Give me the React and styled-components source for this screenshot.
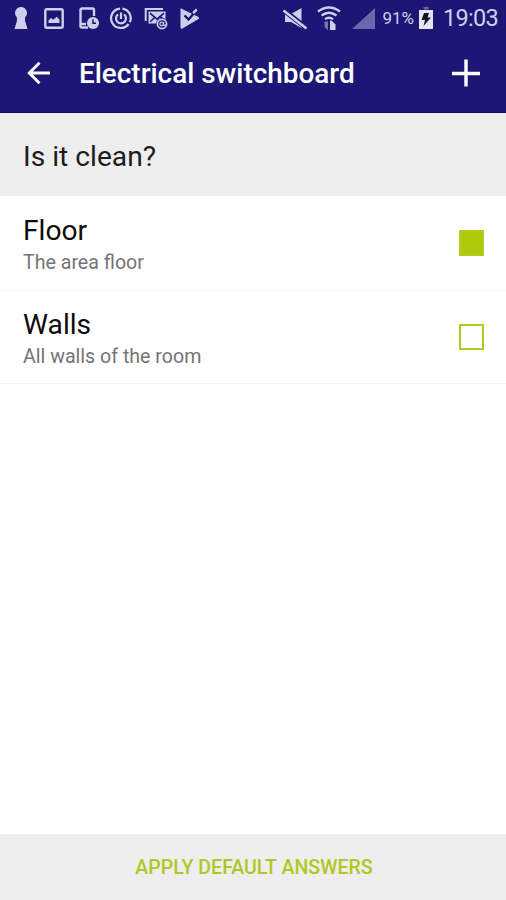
import React, { useState } from 'react'
import styled, { createGlobalStyle } from 'styled-components'

const questions = [
  { id: 'floor', title: 'Floor', hint: 'The area floor', checked: true },
  { id: 'walls', title: 'Walls', hint: 'All walls of the room', checked: false },
]

const KeyholeIcon = () => (
  <StatusIcon $width={14} viewBox="0 0 14 24">
    <path d="M7 1a6 6 0 0 1 4 10.400l.2 1.200c-.4 1-.2 2 .2 3.400L13.500 23H.5l2.100-7c.4-1.400.6-2.400.2-3.400l.2-1.200A6 6 0 0 1 7 1z" fill="currentColor" />
  </StatusIcon>
)

const PictureIcon = () => (
  <StatusIcon $width={20} $left={16} viewBox="0 0 20 24">
    <rect x="1.300" y="3.300" width="17.400" height="18.400" rx="1.500" fill="none" stroke="currentColor" strokeWidth="2.400" />
    <path d="M4.500 17v-2.500l2.500-2.500 2.200 1.800 3.600-3 2.700 3V17z" fill="currentColor" />
  </StatusIcon>
)

const PhoneClockIcon = () => (
  <StatusIcon $width={20} $left={15} viewBox="0 0 20 24">
    <path d="M9 21.500H3a1.500 1.500 0 0 1-1.500-1.500V4A1.500 1.500 0 0 1 3 2.500h10.500A1.500 1.500 0 0 1 15 4v6M2 18h5" fill="none" stroke="currentColor" strokeWidth="2.400" />
    <circle cx="14" cy="17" r="6" fill="currentColor" />
    <path d="M14 13.300v3.900h3" fill="none" stroke="#1c1675" strokeWidth="1.400" />
  </StatusIcon>
)

const PowerCircleIcon = () => (
  <StatusIcon $width={22} $left={11} viewBox="0 0 22 24">
    <g fill="none" stroke="currentColor" strokeWidth="2.200">
      <path d="M12.500 2.600a9.700 9.700 0 0 1 7.300 13.700M18.600 18a9.700 9.700 0 1 1-8.500-15.400" />
      <path d="M8 8.300a5 5 0 1 0 6 0M11 6.500V13" strokeWidth="2.200" />
    </g>
  </StatusIcon>
)

const MailIcon = () => (
  <StatusIcon $width={24} $left={12} viewBox="0 0 24 24">
    <path d="M1.700 15V3H19" fill="none" stroke="currentColor" strokeWidth="2" />
    <path d="M4.500 5.500h17v12h-17z" fill="currentColor" />
    <path d="M6 7.200l7 6 7-6M6.300 15.800l4-4M19.500 13l-3-2" fill="none" stroke="#1c1675" strokeWidth="1.600" />
    <circle cx="18" cy="18" r="6" fill="#1c1675" />
    <circle cx="18" cy="18" r="4.600" fill="none" stroke="currentColor" strokeWidth="1.700" />
    <circle cx="17.700" cy="18" r="1.800" fill="none" stroke="currentColor" strokeWidth="1.300" />
    <path d="M19.600 16v3.200h2.500" fill="none" stroke="currentColor" strokeWidth="1.200" />
  </StatusIcon>
)

const PlayCheckIcon = () => (
  <StatusIcon $width={20} $left={12} viewBox="0 0 20 24">
    <path d="M.5 2.300L18.500 11q1.500 1 0 2L2.500 22.500Q.5 23.200.5 21.500z" fill="currentColor" />
    <path d="M4.500 9.500l4 4L16 5" fill="none" stroke="#1c1675" strokeWidth="1.900" />
    <path d="M12.500 6l3.500-3.500 1.500 2-4 4z" fill="currentColor" />
    <path d="M5 9.700l3.500 3.600 5-5.500" fill="none" stroke="#1c1675" strokeWidth="1.900" />
  </StatusIcon>
)

const MuteIcon = () => (
  <StatusIcon $width={24} viewBox="0 0 24 24">
    <path d="M2 8h6l10.500-6v20L8 16H2z" fill="currentColor" />
    <path d="M1 4.500l22 17" stroke="#1c1675" strokeWidth="5" />
    <path d="M.5 4.500l23 18" stroke="currentColor" strokeWidth="2.500" />
  </StatusIcon>
)

const WifiIcon = () => (
  <StatusIcon $width={24} $left={10} viewBox="0 0 24 24">
    <g fill="none" stroke="currentColor" strokeWidth="2.300">
      <path d="M1 5.500q11-8 22 0M4.500 9.500q7.500-5.500 15 0M8 13.200q4-3 8 0" />
    </g>
    <path d="M7.500 15.500h3.500v9L7.500 21z" fill="currentColor" opacity=".5" />
    <path d="M14.500 14.500l4 4v5.500h-5.500v-9.500z" fill="currentColor" />
  </StatusIcon>
)

const SignalIcon = () => (
  <StatusIcon $width={23} $left={11} viewBox="0 0 23 24">
    <path d="M23 2v21H0z" fill="#6b67ab" />
  </StatusIcon>
)

const BatteryIcon = () => (
  <StatusIcon $width={14} $left={5} viewBox="0 0 14 24">
    <path d="M4.500 1h5v2.500h-5z" fill="#6b67ab" />
    <path d="M0 4h14v19H0z" fill="#e4e4f2" />
    <path d="M5 7h5L8.500 11.500H12L4.500 20l1.500-6H2.500z" fill="#15131f" />
  </StatusIcon>
)

const StatusBar = () => (
  <StatusRow>
    <StatusGroup>
      <KeyholeIcon />
      <PictureIcon />
      <PhoneClockIcon />
      <PowerCircleIcon />
      <MailIcon />
      <PlayCheckIcon />
    </StatusGroup>
    <StatusGroup>
      <MuteIcon />
      <WifiIcon />
      <SignalIcon />
      <BatteryLevel>91%</BatteryLevel>
      <BatteryIcon />
      <Clock>19:03</Clock>
    </StatusGroup>
  </StatusRow>
)

const App = () => {
  const [items, setItems] = useState(questions)

  const toggle = id =>
    setItems(items.map(item => (item.id === id ? { ...item, checked: !item.checked } : item)))

  return (
    <Screen>
      <GlobalStyle />
      <Header>
        <StatusBar />
        <Toolbar>
          <IconButton aria-label="Back">
            <svg width="24" height="24" viewBox="0 0 24 24" fill="none" stroke="#fff" strokeWidth="2.900">
              <path d="M23 12H3M12.500 1.800L2.300 12l10.200 10.200" />
            </svg>
          </IconButton>
          <Title>Electrical switchboard</Title>
          <IconButton aria-label="Add">
            <svg width="28" height="28" viewBox="0 0 28 28" fill="none" stroke="#fff" strokeWidth="3.400">
              <path d="M14 .5v27M0 14.500h28" />
            </svg>
          </IconButton>
        </Toolbar>
      </Header>

      <Question>Is it clean?</Question>

      <List>
        {items.map(item => (
          <Row key={item.id} onClick={() => toggle(item.id)}>
            <RowText>
              <RowTitle>{item.title}</RowTitle>
              <RowHint>{item.hint}</RowHint>
            </RowText>
            <Checkbox role="checkbox" aria-checked={item.checked} $checked={item.checked} />
          </Row>
        ))}
      </List>

      <ApplyButton>APPLY DEFAULT ANSWERS</ApplyButton>
    </Screen>
  )
}

const GlobalStyle = createGlobalStyle`
  * {
    box-sizing: border-box;
  }

  body {
    margin: 0;
    background: #fff;
    font-family: Roboto, sans-serif;
  }
`

const Screen = styled.div`
  display: flex;
  flex-direction: column;
  height: 100vh;
  background: #fff;
`

const Header = styled.header`
  height: 113px;
  background: #1c1675;
  border-bottom: 1px solid #120b62;
`

const StatusRow = styled.div`
  display: flex;
  justify-content: space-between;
  height: 36px;
  padding: 0 8px 0 14px;
  color: #d0cfeb;
`

const StatusGroup = styled.div`
  display: flex;
  align-items: center;
`

const StatusIcon = styled.svg`
  flex: none;
  width: ${props => props.$width}px;
  height: 24px;
  margin-left: ${props => props.$left || 0}px;
  margin-top: -1px;
  overflow: visible;
`

const BatteryLevel = styled.span`
  margin-left: 7px;
  font-size: 17px;
  line-height: 38px;
`

const Clock = styled.span`
  margin-left: 10px;
  font-size: 23.5px;
  letter-spacing: -0.7px;
  line-height: 38px;
`

const Toolbar = styled.div`
  display: flex;
  align-items: center;
  height: 74px;
  padding: 0 26px 0 27px;
`

const IconButton = styled.button`
  display: flex;
  padding: 0;
  border: 0;
  background: none;
`

const Title = styled.h1`
  flex: 1;
  margin: 0 0 0 28px;
  padding-top: 1px;
  color: #fff;
  font-size: 27.9px;
  font-weight: 500;
  line-height: 32px;
`

const Question = styled.h2`
  margin: 0;
  padding: 0 23px;
  height: 83px;
  background: #eee;
  color: #1c1c1c;
  font-size: 28.2px;
  font-weight: 400;
  line-height: 87px;
`

const List = styled.div`
  flex: 1;
`

const Row = styled.div`
  display: flex;
  align-items: center;
  justify-content: space-between;
  height: 94px;
  padding: 0 22px 0 23px;
  border-bottom: 1px solid #f4f4f4;

  &:first-child {
    height: 95px;
    border-bottom-color: #f9f9f9;
  }

  & + & {
    height: 93px;
  }
`

const RowText = styled.div`
  padding-top: 5px;
`

const RowTitle = styled.div`
  color: #0c0c0c;
  font-size: 28.2px;
  line-height: 34px;
`

const RowHint = styled.div`
  color: #747474;
  font-size: 19.6px;
  line-height: 29px;
`

const Checkbox = styled.span`
  width: 25px;
  height: 26px;
  border: 2px solid #b2cb1b;
  background: ${props => (props.$checked ? '#afca0b' : '#fff')};
`

const ApplyButton = styled.button`
  height: 66px;
  padding: 1px 0 0 2px;
  border: 0;
  background: #eee;
  color: #b2c624;
  font-family: inherit;
  font-size: 19.6px;
  font-weight: 500;
`

export default App
